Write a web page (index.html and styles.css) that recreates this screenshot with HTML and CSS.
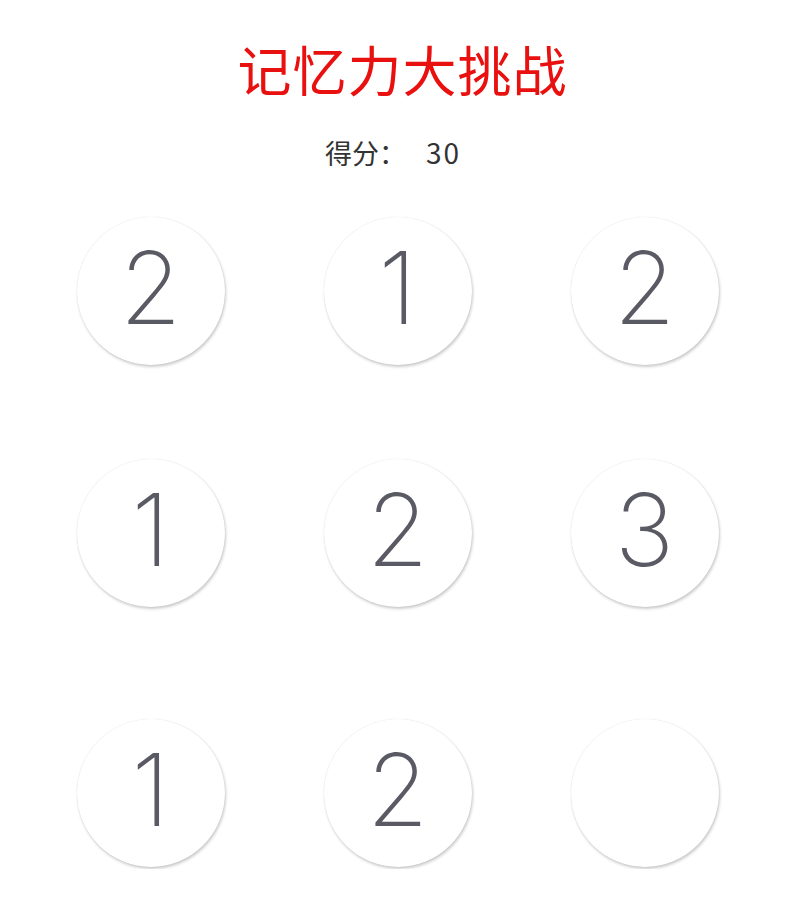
FILE: index.html
```html
<!DOCTYPE html>
<html lang="zh-CN">
<head>
<meta charset="utf-8">
<title>记忆力大挑战</title>
<link rel="stylesheet" href="styles.css">
</head>
<body>
<main class="page">
  <h1 class="title">记忆力大挑战</h1>
  <p class="score">得分：<span class="score-value">30</span></p>
  <div class="board">
    <div class="cell"><button class="tile">2</button></div>
    <div class="cell"><button class="tile">1</button></div>
    <div class="cell"><button class="tile">2</button></div>
    <div class="cell"><button class="tile">1</button></div>
    <div class="cell"><button class="tile">2</button></div>
    <div class="cell"><button class="tile">3</button></div>
    <div class="cell"><button class="tile">1</button></div>
    <div class="cell"><button class="tile">2</button></div>
    <div class="cell"><button class="tile tile-empty"></button></div>
  </div>
</main>
</body>
</html>
```
FILE: styles.css
```css
html, body {
  margin: 0;
  padding: 0;
  background: #ffffff;
}

.page {
  display: flex;
  flex-direction: column;
  align-items: center;
}

.title {
  margin: 39px 0 0 5px;
  font-family: "Noto Sans CJK SC", sans-serif;
  font-size: 54px;
  font-weight: 400;
  line-height: 60px;
  letter-spacing: 1px;
  color: #e8110f;
}

.score {
  margin: 38px 0 0 -14px;
  font-family: "Noto Sans CJK SC", sans-serif;
  font-size: 27px;
  line-height: 30px;
  color: #333333;
}

.score-value {
  margin-left: 20px;
  letter-spacing: 2px;
  font-size: 28px;
}

.board {
  margin-top: 49px;
  width: 741px;
  display: grid;
  grid-template-columns: repeat(3, 1fr);
  grid-template-rows: 242px 260px 150px;
  margin-left: -5px;
}

.cell {
  display: flex;
  justify-content: center;
  align-items: flex-start;
}

.tile {
  width: 148px;
  height: 148px;
  border: none;
  border-radius: 50%;
  background: #ffffff;
  box-shadow: 1px 2px 3px rgba(0, 0, 0, 0.2), 0 0 1px rgba(0, 0, 0, 0.15);
  padding: 0 0 6px 0;
  font-family: Inter, "Liberation Sans", sans-serif;
  font-weight: 250;
  font-size: 100px;
  line-height: 1;
  color: #5a5a64;
  display: flex;
  align-items: center;
  justify-content: center;
}
```
